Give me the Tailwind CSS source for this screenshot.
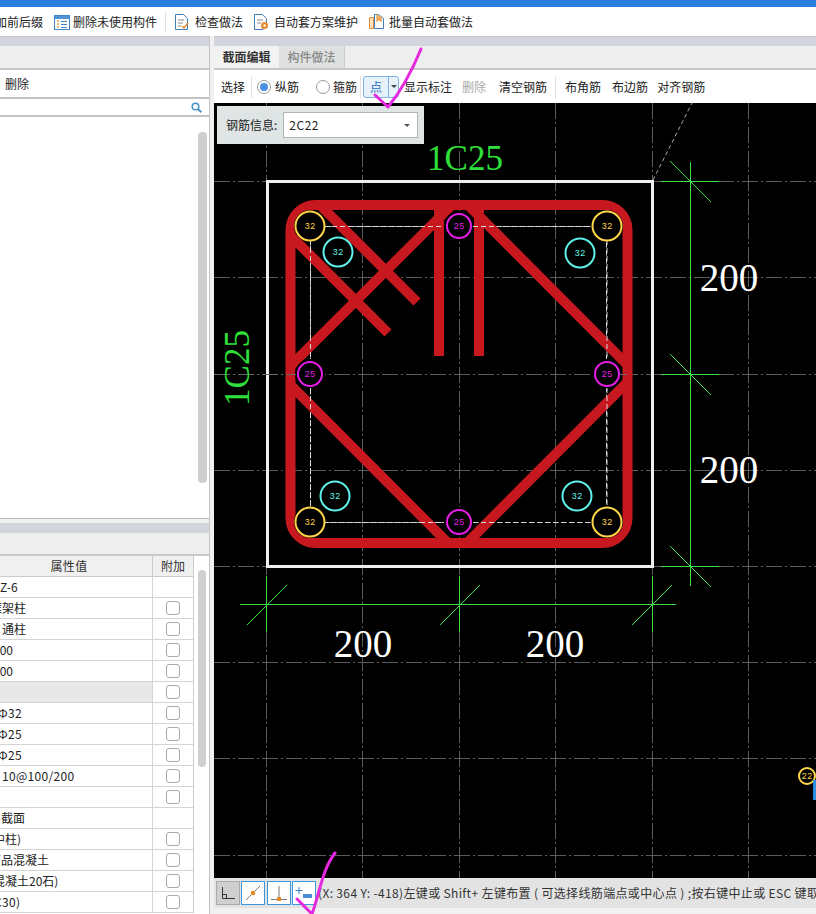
<!DOCTYPE html>
<html>
<head>
<meta charset="utf-8">
<script src="https://cdn.jsdelivr.net/npm/@tailwindcss/browser@4"></script>
</head>
<body class="overflow-hidden bg-white">
<div class="relative w-[816px] h-[914px] overflow-hidden flex flex-col text-[12px] text-[#222] font-['Noto_Sans_CJK_SC','Liberation_Sans',sans-serif]">
  <div class="h-[7px] bg-[#2b7fdd] shrink-0"></div>
  <!-- top toolbar -->
  <div class="h-[29px] shrink-0 bg-white flex items-center whitespace-nowrap pt-[1px]">
    <span class="w-[43px] overflow-hidden flex justify-end shrink-0"><span class="shrink-0">加前后缀</span></span>
    <svg class="ml-[11px] shrink-0" width="16" height="15" viewBox="0 0 16 15"><rect x=".5" y=".5" width="15" height="14" fill="#fff" stroke="#3f86c9"/><rect x="1" y="1" width="14" height="3" fill="#4f94d6"/><path d="M3 6h2M3 9h2M3 12h2" stroke="#e9a23b" stroke-width="1.5"/><path d="M7 6.500h6M7 9.500h6M7 12.500h6" stroke="#3f86c9"/></svg>
    <span class="ml-[3px] shrink-0">删除未使用构件</span>
    <span class="ml-[8px] w-px h-[20px] bg-[#ddd] shrink-0"></span>
    <svg class="ml-[9px] shrink-0" width="14" height="16" viewBox="0 0 14 16"><path d="M.5.500h8l4 4v11H.5z" fill="#fff" stroke="#3f7fb8"/><path d="M3 6h6M3 9h5M3 12h3" stroke="#888"/><path d="M7 12l2 2 4-5" fill="none" stroke="#e08a2c" stroke-width="1.500"/></svg>
    <span class="ml-[6px] shrink-0">检查做法</span>
    <svg class="ml-[11px] shrink-0" width="15" height="16" viewBox="0 0 15 16"><path d="M.5.500h8l4 4v6H9v5H.5z" fill="#fff" stroke="#3f7fb8"/><path d="M3 6h6M3 9h4" stroke="#888"/><circle cx="10.500" cy="11.500" r="3.500" fill="#e8892a"/><circle cx="10.500" cy="11.500" r="1.200" fill="#fff"/></svg>
    <span class="ml-[5px] shrink-0">自动套方案维护</span>
    <svg class="ml-[11px] shrink-0" width="16" height="16" viewBox="0 0 16 16"><path d="M.5 3.500h4v11h-4z" fill="#fbe3c4" stroke="#e08a2c"/><path d="M5.500.500h4l5 4v10h-9z" fill="#fff" stroke="#3f7fb8"/><path d="M8 .500v7l2-2 2 2V2.500" fill="#f2b36a" stroke="#e08a2c"/></svg>
    <span class="ml-[4px] shrink-0">批量自动套做法</span>
  </div>
  <!-- main -->
  <div class="flex-1 flex min-h-0 bg-[#e8e8e8]">
    <!-- left column -->
    <div class="w-[210px] shrink-0 flex flex-col bg-white border-r border-[#c4c4c4]">
      <div class="h-[10px] bg-[#d2d5dc] border-t border-[#c4c4c4] shrink-0"></div>
      <div class="h-[24px] bg-[#eeeeee] border-b-2 border-[#c8c8c8] shrink-0"></div>
      <div class="h-[27px] bg-white flex items-center pl-[5px] shrink-0">删除</div>
      <div class="h-[20px] bg-white border-y-2 border-[#c2c2c2] flex items-center justify-end pr-[7px] shrink-0">
        <svg width="11" height="11" viewBox="0 0 11 11" fill="none" stroke="#4a93c9" stroke-width="1.500"><circle cx="4.500" cy="4.500" r="3.300"/><path d="M7 7l3.300 3.300" stroke-width="2"/></svg>
      </div>
      <div class="h-[402px] bg-white border-b border-[#bbb] relative shrink-0">
        <div class="absolute left-[198px] top-[15px] w-[9px] h-[351px] rounded bg-[#cfcfcf]"></div>
      </div>
      <div class="h-[4px] bg-[#f0f0f0] shrink-0"></div>
      <div class="h-[10px] bg-[#d2d5dc] shrink-0"></div>
      <div class="h-[23px] bg-[#eeeeee] border-b-2 border-[#c8c8c8] shrink-0"></div>
      <!-- table -->
      <div class="relative flex-1 min-h-0 overflow-hidden">
        <div class="absolute left-[198px] top-[14px] w-[8px] h-[197px] rounded bg-[#cfcfcf]"></div>
        <div class="w-[194px] border-r border-[#ccc]">
          <div class="grid grid-cols-[153px_40px] h-[21px] bg-[#f0f0f0] border-b border-[#ccc] text-center leading-[20px] text-[#333]">
            <div class="border-r border-[#ccc] pr-[14px] tracking-[0.3px]">属性值</div><div>附加</div>
          </div>
          <div class="grid grid-cols-[153px_40px] h-[21px] border-b border-[#d4d4d4]"><div class="border-r border-[#d4d4d4] leading-[20px]">Z-6</div><div></div></div>
          <div class="grid grid-cols-[153px_40px] h-[21px] border-b border-[#d4d4d4]"><div class="border-r border-[#d4d4d4] leading-[20px] overflow-hidden whitespace-nowrap"><span class="-ml-[10px] inline-block">框架柱</span></div><div class="flex items-center justify-center"><span class="w-[14px] h-[14px] rounded-[3px] border border-[#aaa] bg-white"></span></div></div>
          <div class="grid grid-cols-[153px_40px] h-[21px] border-b border-[#d4d4d4]"><div class="border-r border-[#d4d4d4] leading-[20px] overflow-hidden whitespace-nowrap pl-[2px]">通柱</div><div class="flex items-center justify-center"><span class="w-[14px] h-[14px] rounded-[3px] border border-[#aaa] bg-white"></span></div></div>
          <div class="grid grid-cols-[153px_40px] h-[21px] border-b border-[#d4d4d4]"><div class="border-r border-[#d4d4d4] leading-[20px] overflow-hidden whitespace-nowrap"><span class="-ml-[7px] inline-block">400</span></div><div class="flex items-center justify-center"><span class="w-[14px] h-[14px] rounded-[3px] border border-[#aaa] bg-white"></span></div></div>
          <div class="grid grid-cols-[153px_40px] h-[21px] border-b border-[#d4d4d4]"><div class="border-r border-[#d4d4d4] leading-[20px] overflow-hidden whitespace-nowrap"><span class="-ml-[7px] inline-block">400</span></div><div class="flex items-center justify-center"><span class="w-[14px] h-[14px] rounded-[3px] border border-[#aaa] bg-white"></span></div></div>
          <div class="grid grid-cols-[153px_40px] h-[21px] border-b border-[#d4d4d4]"><div class="border-r border-[#d4d4d4] bg-[#e8e8e8]"></div><div class="flex items-center justify-center"><span class="w-[14px] h-[14px] rounded-[3px] border border-[#aaa] bg-white"></span></div></div>
          <div class="grid grid-cols-[153px_40px] h-[21px] border-b border-[#d4d4d4]"><div class="border-r border-[#d4d4d4] leading-[20px] overflow-hidden whitespace-nowrap tracking-[0.4px]"><span class="-ml-[2px] inline-block">Φ32</span></div><div class="flex items-center justify-center"><span class="w-[14px] h-[14px] rounded-[3px] border border-[#aaa] bg-white"></span></div></div>
          <div class="grid grid-cols-[153px_40px] h-[21px] border-b border-[#d4d4d4]"><div class="border-r border-[#d4d4d4] leading-[20px] overflow-hidden whitespace-nowrap tracking-[0.4px]"><span class="-ml-[2px] inline-block">Φ25</span></div><div class="flex items-center justify-center"><span class="w-[14px] h-[14px] rounded-[3px] border border-[#aaa] bg-white"></span></div></div>
          <div class="grid grid-cols-[153px_40px] h-[21px] border-b border-[#d4d4d4]"><div class="border-r border-[#d4d4d4] leading-[20px] overflow-hidden whitespace-nowrap tracking-[0.4px]"><span class="-ml-[2px] inline-block">Φ25</span></div><div class="flex items-center justify-center"><span class="w-[14px] h-[14px] rounded-[3px] border border-[#aaa] bg-white"></span></div></div>
          <div class="grid grid-cols-[153px_40px] h-[21px] border-b border-[#d4d4d4]"><div class="border-r border-[#d4d4d4] leading-[20px] overflow-hidden whitespace-nowrap pl-[2px] tracking-[0.3px]">10@100/200</div><div class="flex items-center justify-center"><span class="w-[14px] h-[14px] rounded-[3px] border border-[#aaa] bg-white"></span></div></div>
          <div class="grid grid-cols-[153px_40px] h-[21px] border-b border-[#d4d4d4]"><div class="border-r border-[#d4d4d4]"></div><div class="flex items-center justify-center"><span class="w-[14px] h-[14px] rounded-[3px] border border-[#aaa] bg-white"></span></div></div>
          <div class="grid grid-cols-[153px_40px] h-[21px] border-b border-[#d4d4d4]"><div class="border-r border-[#d4d4d4] leading-[20px] overflow-hidden whitespace-nowrap pl-[1px]">截面</div><div></div></div>
          <div class="grid grid-cols-[153px_40px] h-[21px] border-b border-[#d4d4d4]"><div class="border-r border-[#d4d4d4] leading-[20px] overflow-hidden whitespace-nowrap"><span class="-ml-[7px] inline-block">中柱)</span></div><div class="flex items-center justify-center"><span class="w-[14px] h-[14px] rounded-[3px] border border-[#aaa] bg-white"></span></div></div>
          <div class="grid grid-cols-[153px_40px] h-[21px] border-b border-[#d4d4d4]"><div class="border-r border-[#d4d4d4] leading-[20px] overflow-hidden whitespace-nowrap"><span class="-ml-[11px] inline-block">商品混凝土</span></div><div class="flex items-center justify-center"><span class="w-[14px] h-[14px] rounded-[3px] border border-[#aaa] bg-white"></span></div></div>
          <div class="grid grid-cols-[153px_40px] h-[21px] border-b border-[#d4d4d4]"><div class="border-r border-[#d4d4d4] leading-[20px] overflow-hidden whitespace-nowrap"><span class="-ml-[7px] inline-block">混凝土20石)</span></div><div class="flex items-center justify-center"><span class="w-[14px] h-[14px] rounded-[3px] border border-[#aaa] bg-white"></span></div></div>
          <div class="grid grid-cols-[153px_40px] h-[21px] border-b border-[#d4d4d4]"><div class="border-r border-[#d4d4d4] leading-[20px] overflow-hidden whitespace-nowrap tracking-[0.3px]"><span class="-ml-[6px] inline-block">C30)</span></div><div class="flex items-center justify-center"><span class="w-[14px] h-[14px] rounded-[3px] border border-[#aaa] bg-white"></span></div></div>
        </div>
      </div>
    </div>
    <div class="w-[4px] shrink-0 bg-[#f0f0f0]"></div>
    <!-- right column -->
    <div class="flex-1 min-w-0 flex flex-col bg-white">
      <div class="h-[10px] bg-[#d2d5dc] border-t border-[#c4c4c4] shrink-0"></div>
      <div class="h-[24px] bg-[#eeeeee] border-b-2 border-[#c8c8c8] shrink-0 flex items-stretch">
        <div class="w-[65px] flex items-center justify-center font-bold text-[#333] bg-[#f2f2f2]">截面编辑</div>
        <div class="w-[66px] flex items-center justify-center font-medium text-[#888] bg-[#dfe1e1] border-r border-[#ccc]">构件做法</div>
      </div>
      <div class="h-[33px] shrink-0 bg-white flex items-center whitespace-nowrap relative">
        <span class="ml-[7px]">选择</span>
        <span class="ml-[6px] w-px h-[22px] bg-[#e2e2e2]"></span>
        <span class="ml-[5px] w-[14px] h-[14px] rounded-full border border-[#999] bg-white flex items-center justify-center"><span class="w-[8px] h-[8px] rounded-full bg-[#4a90e2]"></span></span>
        <span class="ml-[4px]">纵筋</span>
        <span class="ml-[17px] w-[14px] h-[14px] rounded-full border border-[#999] bg-white"></span>
        <span class="ml-[3px]">箍筋</span>
        <span class="ml-[3px] w-px h-[22px] bg-[#e2e2e2]"></span>
        <span class="ml-[2px] flex h-[22px] w-[36px] border border-[#7fb2e5] rounded-[3px] bg-[#e6f1fb] text-[#1c6fc4]">
          <span class="w-[25px] text-center leading-[20px] border-r border-[#7fb2e5]">点</span>
          <span class="flex-1 flex items-center justify-center"><span class="w-0 h-0 border-x-[3px] border-x-transparent border-t-[3px] border-t-[#444]"></span></span>
        </span>
        <span class="ml-[5px]">显示标注</span>
        <span class="ml-[10px] text-[#aaa]">删除</span>
        <span class="ml-[13px]">清空钢筋</span>
        <span class="ml-[8px] w-px h-[22px] bg-[#e2e2e2]"></span>
        <span class="ml-[9px]">布角筋</span>
        <span class="ml-[11px]">布边筋</span>
        <span class="ml-[9px]">对齐钢筋</span>
      </div>
      <!-- canvas -->
      <div class="h-[775px] shrink-0 bg-black relative overflow-hidden">
        <svg class="absolute left-[-214px] top-[-103px]" width="816" height="914" viewBox="0 0 816 914">
          <g stroke="#5c5c5c" stroke-width="1" stroke-dasharray="16 3 2 3" fill="none">
            <path d="M266.500 103V878M362.500 103V878M459.500 103V878M555.500 103V878M652.500 103V878M748.500 103V878"/>
            <path d="M214 181.500H816M214 277.500H816M214 374.500H816M214 470.500H816M214 566.500H816M214 662.500H816M214 758.500H816M214 855.500H816"/>
          </g>
          <path d="M653 180L692 103" stroke="#aaa" stroke-dasharray="4 3" fill="none"/>
          <rect x="310.500" y="226.500" width="296" height="296" fill="none" stroke="#d8d8d8" stroke-dasharray="5 3"/>
          <rect x="267.500" y="181.500" width="385" height="385" fill="none" stroke="#efefef" stroke-width="3"/>
          <!-- rebar -->
          <g stroke="#c8181f" stroke-width="10" fill="none">
            <rect x="290.500" y="205" width="337" height="338" rx="25"/>
            <path d="M320 205L417 302M290 235L388 333M290.500 366L452 205M439 205V356M479 205V356M468 205L627.500 365M290.500 385L448 543M627.500 382L467 543"/>
          </g>
          <g fill="#000">
            <circle cx="310" cy="226" r="16"/><circle cx="607" cy="226" r="16"/><circle cx="310" cy="522" r="16"/><circle cx="607" cy="522" r="16"/>
            <circle cx="459" cy="226" r="15"/><circle cx="310" cy="374" r="15"/><circle cx="607" cy="374" r="15"/><circle cx="459" cy="522" r="15"/>
          </g>
          <g stroke="#6a6a6a" stroke-dasharray="16 3 2 3" fill="none"><path d="M214 374.500H296M620 374.500H627"/></g>
          <path d="M310.500 240V360M310.500 388V508M607 240V360M607 388V508M324 226.500H444M473 226.500H593M324 522.500H444M473 522.500H593" stroke="#d8d8d8" stroke-dasharray="5 3" fill="none"/>
          <g fill="none" stroke-width="2">
            <g stroke="#ffd54a"><circle cx="310" cy="226" r="14.500"/><circle cx="607" cy="226" r="14.500"/><circle cx="310" cy="522" r="14.500"/><circle cx="607" cy="522" r="14.500"/></g>
            <g stroke="#e81ee8"><circle cx="459" cy="226" r="12"/><circle cx="310" cy="374" r="12"/><circle cx="607" cy="374" r="12"/><circle cx="459" cy="522" r="12"/></g>
            <g stroke="#5ff0e8"><circle cx="338" cy="252" r="14.500"/><circle cx="580" cy="253" r="14.500"/><circle cx="335" cy="496" r="14.500"/><circle cx="577" cy="496" r="14.500"/></g>
          </g>
          <g font-family="'Liberation Mono',monospace" font-size="9" text-anchor="middle">
            <g fill="#ffd54a"><text x="310" y="229">32</text><text x="607" y="229">32</text><text x="310" y="525">32</text><text x="607" y="525">32</text></g>
            <g fill="#e81ee8"><text x="459" y="229">25</text><text x="310" y="377">25</text><text x="607" y="377">25</text><text x="459" y="525">25</text></g>
            <g fill="#5ff0e8"><text x="338" y="255">32</text><text x="580" y="256">32</text><text x="335" y="499">32</text><text x="577" y="499">32</text></g>
          </g>
          <!-- dimensions -->
          <g stroke="#3ee04a" stroke-width="1" fill="none" shape-rendering="crispEdges">
            <path d="M690.500 162V586M661 181.500H719M661 374.500H719M661 566.500H719M670 161L711 202M670 354L711 395M670 546L711 587"/>
            <path d="M240 604.500H676M266.500 576V632M459.500 576V632M652.500 576V632M247 625L287 585M440 625L480 585M632 625L672 585"/>
          </g>
          <g font-family="'Liberation Serif',serif" font-size="39" fill="#fff" text-anchor="middle">
            <text x="729" y="291">200</text><text x="729" y="483">200</text><text x="363" y="657">200</text><text x="555" y="657">200</text>
          </g>
          <g font-family="'Liberation Serif',serif" font-size="35" fill="#2fe03a" text-anchor="middle">
            <text x="465" y="170">1C25</text>
            <text transform="translate(249 368) rotate(-90)">1C25</text>
          </g>
          <circle cx="807" cy="776" r="8" fill="none" stroke="#ffd54a" stroke-width="2"/>
          <text x="807" y="779" font-family="'Liberation Mono',monospace" font-size="9" text-anchor="middle" fill="#ffd54a">22</text>
          <rect x="813" y="780" width="4" height="20" fill="#2b8fdd"/>
        </svg>
        <div class="absolute left-[3px] top-[3px] w-[207px] h-[38px] bg-[#dfe4e4] flex items-center pl-[9px]">
          <span>钢筋信息:</span>
          <span class="ml-[6px] w-[135px] h-[26px] bg-white border border-[#b4b4b4] flex items-center justify-between pl-[5px] pr-[7px] tracking-[0.5px]">2C22<span class="w-0 h-0 border-x-[3px] border-x-transparent border-t-[3px] border-t-[#555]"></span></span>
        </div>
      </div>
      <!-- status -->
      <div class="h-[30px] shrink-0 bg-[#e3e3e3] flex items-center pl-[2px] gap-[1px] whitespace-nowrap overflow-hidden text-[#333]">
        <span class="w-[24px] h-[24px] shrink-0 bg-[#cfcfcf] border border-[#aaa] flex items-center justify-center"><svg width="14" height="14" viewBox="0 0 14 14" fill="none" stroke="#333"><path d="M1.500 1v11.500H14M1.500 8.500h4v4"/></svg></span>
        <span class="w-[24px] h-[24px] shrink-0 bg-white border border-[#3a96dd] flex items-center justify-center"><svg width="16" height="16" viewBox="0 0 16 16" fill="none"><path d="M1 15L15 1" stroke="#777"/><rect x="6" y="6" width="4" height="4" fill="#e8892a"/></svg></span>
        <span class="w-[24px] h-[24px] ml-[1px] shrink-0 bg-white border border-[#3a96dd] flex items-center justify-center"><svg width="18" height="16" viewBox="0 0 18 16" fill="none"><path d="M9 1v13M1 14.500h16" stroke="#777"/><rect x="7" y="12" width="4" height="4" fill="#e8892a"/></svg></span>
        <span class="w-[24px] h-[24px] shrink-0 bg-white border border-[#3a96dd] flex items-center justify-center"><svg width="18" height="16" viewBox="0 0 18 16" fill="none"><path d="M4 2v7M.5 5.500h7" stroke="#3a7fc0"/><rect x="8" y="9" width="9" height="4" fill="#4a90d2"/></svg></span>
        <span class="ml-[1px] shrink-0 tracking-[0.35px]">(X: 364 Y: -418)左键或 Shift+ 左键布置 ( 可选择线筋端点或中心点 ) ;按右键中止或 ESC 键取消</span>
      </div>
      <div class="flex-1 bg-[#f1f1f1]"></div>
    </div>
  </div>
  <!-- hand-drawn check marks -->
  <svg class="absolute left-0 top-0 pointer-events-none" width="816" height="914" viewBox="0 0 816 914" fill="none" stroke="#e629e0" stroke-width="3" stroke-linecap="round" stroke-linejoin="round">
    <path d="M421 49C414 66 402 90 388 107L375 95"/>
    <path d="M335 853C322 870 320 892 312 914M297 899L312 914"/>
  </svg>
</div>
</body>
</html>
